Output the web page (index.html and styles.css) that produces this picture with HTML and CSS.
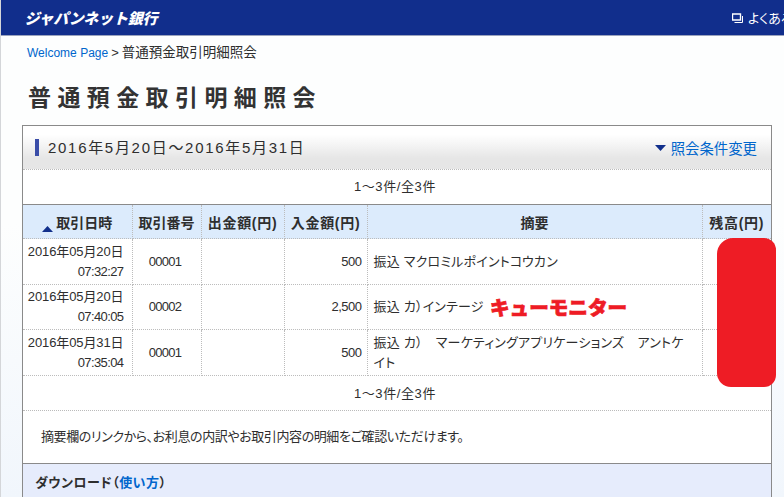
FILE: index.html
```html
<!DOCTYPE html>
<html lang="ja">
<head>
<meta charset="utf-8">
<title>普通預金取引明細照会</title>
<link rel="stylesheet" href="styles.css">
</head>
<body>
<header class="topbar">
  <div class="logo">ジャパンネット銀行</div>
  <div class="faq">
    <svg class="faq-icon" width="11" height="10" viewBox="0 0 11 10"><path d="M.5 1h8v6h-8z" fill="none" stroke="#fff" stroke-width="1.4"/><path d="M10.500 3v6.500h-8" fill="none" stroke="#fff"/></svg>
    <span>よくあるご質問</span>
  </div>
</header>
<div class="page">
  <nav class="crumbs"><a class="crumb-link">Welcome Page</a><span class="crumb-sep">&gt;</span><span class="crumb-now">普通預金取引明細照会</span></nav>
  <h1 class="title">普通預金取引明細照会</h1>
  <section class="panel">
    <div class="panel-head">
      <h2 class="period">2016年5月20日～2016年5月31日</h2>
      <a class="change"><svg width="11" height="6" viewBox="0 0 11 6"><path d="M0 0h11L5.500 6z" fill="#12308c"/></svg>照会条件変更</a>
    </div>
    <div class="pager pager-top">1～3件/全3件</div>
    <table class="rows">
      <colgroup><col class="c1"><col class="c2"><col class="c3"><col class="c4"><col class="c5"><col class="c6"></colgroup>
      <thead>
        <tr>
          <th><svg class="sort" width="11" height="6" viewBox="0 0 11 6"><path d="M5.500 0L11 6H0z" fill="#12308c"/></svg>取引日時</th>
          <th>取引番号</th><th class="yen">出金額(円)</th><th class="yen">入金額(円)</th><th>摘要</th><th class="yen">残高(円)</th>
        </tr>
      </thead>
      <tbody>
        <tr class="tall"><td class="date">2016年05月20日<br><span class="time">07:32:27</span></td><td class="num">00001</td><td></td><td class="amt">500</td><td class="memo">振込 マクロミルポイントコウカン</td><td></td></tr>
        <tr><td class="date">2016年05月20日<br><span class="time">07:40:05</span></td><td class="num">00002</td><td></td><td class="amt">2,500</td><td class="memo">振込 カ）インテージ</td><td></td></tr>
        <tr class="tall"><td class="date">2016年05月31日<br><span class="time">07:35:04</span></td><td class="num">00001</td><td></td><td class="amt">500</td><td class="memo">振込 カ）　マーケティングアプリケーションズ　アントケ<br>イト</td><td></td></tr>
      </tbody>
    </table>
    <div class="pager pager-bottom">1～3件/全3件</div>
    <p class="note">摘要欄のリンクから、お利息の内訳やお取引内容の明細をご確認いただけます。</p>
    <div class="download"><b>ダウンロード（<a class="how">使い方</a>）</b></div>
  </section>
</div>
<div class="redact"></div>
<div class="annot">キューモニター</div>
</body>
</html>
```

FILE: styles.css
```css
html, body { margin: 0; padding: 0; height: 497px; overflow: hidden; }
body {
  background: linear-gradient(#fdfefe 45%, #f1f6fc 100%);
  color: #2e2e2e;
  font-family: "Liberation Sans", "Noto Sans CJK JP", sans-serif;
  font-feature-settings: "palt";
  font-size: 13px;
  border-left: 1px solid #d4d6d9;
  position: relative;
}
.topbar {
  height: 35px;
  background: #112e8c;
  border-bottom: 1px solid #9aa3bd;
  display: flex;
  justify-content: space-between;
  align-items: center;
  padding-left: 25px;
  white-space: nowrap;
  overflow: hidden;
}
.logo {
  color: #fff;
  font-family: "Noto Sans CJK JP", sans-serif;
  font-feature-settings: normal;
  font-size: 15px;
  font-weight: 900;
  letter-spacing: -.2px;
  transform: skewX(-14deg);
}
.faq {
  color: #fff;
  font-size: 13px;
  display: flex;
  align-items: center;
  gap: 5px;
  flex: 0 0 auto;
  width: 52px;
  overflow: hidden;
}
.faq-icon { flex: 0 0 auto; }
.faq span { flex: 0 0 auto; }
.page { padding-left: 21px; }
.crumbs {
  height: 33px;
  line-height: 33px;
  padding-left: 5px;
  white-space: nowrap;
}
.crumb-link { color: #0066cc; font-size: 12px; }
.crumb-sep { margin: 0 3px; }
.crumb-now { font-feature-settings: normal; font-size: 13.500px; }
.title {
  margin: 0;
  height: 56px;
  line-height: 59px;
  padding-left: 6px;
  font-size: 23px;
  font-weight: 700;
  font-feature-settings: normal;
  letter-spacing: 6.400px;
  color: #333;
  white-space: nowrap;
}
.panel {
  width: 748px;
  height: 372px;
  background: #fff;
  border: 1px solid #8a8a8a;
  border-bottom: 0;
}
.panel-head {
  height: 43px;
  border-bottom: 1px dotted #bbb;
  background: linear-gradient(#fff 0, #fff 20%, #e6e6e6 75%, #e6e6e6 100%);
  display: flex;
  align-items: center;
  justify-content: space-between;
  padding: 0 14px 0 12px;
}
.period {
  margin: 0;
  font-size: 15px;
  font-weight: 400;
  font-feature-settings: normal;
  letter-spacing: 1.700px;
  line-height: 17px;
  border-left: 4px solid #3a4da8;
  padding-left: 9px;
  white-space: nowrap;
}
.change {
  color: #0066cc;
  font-size: 14.400px;
  font-feature-settings: normal;
  display: flex;
  align-items: center;
  gap: 5px;
  white-space: nowrap;
}
.pager { text-align: center; letter-spacing: .6px; padding-right: 4px; }
.pager-top { height: 34px; line-height: 34px; }
.pager-bottom { height: 34px; line-height: 35px; border-bottom: 1px dotted #bbb; }
.rows {
  width: 748px;
  table-layout: fixed;
  border-collapse: collapse;
  border-top: 1px solid #8a8a8a;
}
.c1 { width: 109px; }
.c2 { width: 69px; }
.c3 { width: 83px; }
.c4 { width: 83px; }
.c5 { width: 335px; }
.c6 { width: 69px; }
.rows th, .rows td { border: 1px dotted #bcbcbc; padding: 0; }
.rows tr > :first-child { border-left: 0; }
.rows tr > :last-child { border-right: 0; }
.rows th {
  height: 33px;
  background: #dcebfc;
  font-size: 14px;
  font-weight: 700;
  font-feature-settings: normal;
  text-align: center;
  white-space: nowrap;
}
.rows .yen { letter-spacing: .7px; }
.sort { margin-right: 3px; vertical-align: -4px; }
.rows td { height: 44px; line-height: 20px; letter-spacing: -.1px; }
.rows .tall td { height: 45px; }
.time { letter-spacing: -.6px; }
.date { text-align: right; padding-right: 8px !important; }
.num { text-align: center; letter-spacing: -.7px !important; padding-right: 3px !important; }
.amt { text-align: right; padding-right: 5px !important; letter-spacing: -.5px !important; }
.memo { padding-left: 6px !important; padding-right: 8px !important; letter-spacing: .2px !important; white-space: nowrap; }
.note {
  margin: 0;
  height: 52px;
  line-height: 52px;
  padding-left: 18px;
  letter-spacing: -.4px;
  white-space: nowrap;
  border-bottom: 1px solid #8a8a8a;
}
.download {
  height: 33px;
  line-height: 38px;
  background: #e6ecfc;
  padding-left: 12px;
  font-size: 13px;
  letter-spacing: .5px;
}
.download b { font-weight: 700; }
.how { color: #0066cc; }
.redact {
  position: absolute;
  left: 716px;
  top: 238px;
  width: 59px;
  height: 149px;
  background: #ee1c25;
  border-radius: 16px 12px 12px 14px;
  filter: blur(.6px);
}
.annot {
  position: absolute;
  left: 489px;
  top: 293px;
  color: #ee1c25;
  font-family: "Noto Sans CJK JP", sans-serif;
  font-feature-settings: normal;
  font-size: 19.600px;
  line-height: 28px;
  font-weight: 900;
  -webkit-text-stroke: .7px #ee1c25;
  white-space: nowrap;
}
```
